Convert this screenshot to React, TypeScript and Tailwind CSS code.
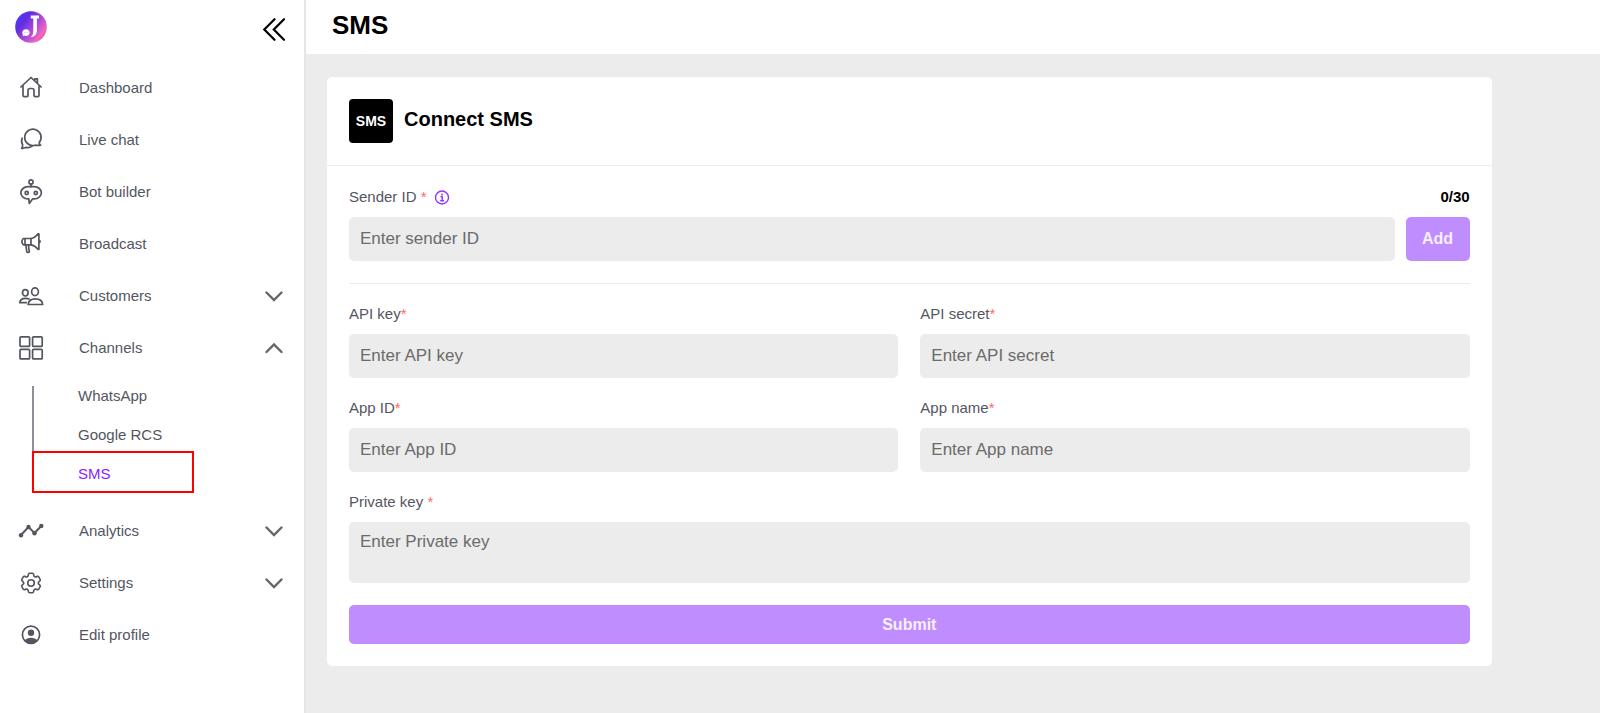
import { useState, type ReactNode } from "react";
import { HiOutlineCog6Tooth } from "react-icons/hi2";

function Icon({ children }: { children: ReactNode }) {
  return (
    <svg
      viewBox="0 0 26 26"
      className="h-[26px] w-[26px] shrink-0"
      fill="none"
      stroke="currentColor"
      strokeWidth="1.7"
      strokeLinecap="round"
      strokeLinejoin="round"
      aria-hidden="true"
    >
      {children}
    </svg>
  );
}

const HomeIcon = () => (
  <Icon>
    <path d="M2.9 12 13 2.5 23.1 12M16.8 5.600V3.800h2.600v4.400" />
    <path d="M5 11v9.500q0 1.200 1.200 1.200h2.600q1.200 0 1.200-1.200v-5q0-2 2-2h2q2 0 2 2v5q0 1.200 1.200 1.200h2.600q1.200 0 1.200-1.200V11" />
  </Icon>
);

const ChatIcon = () => (
  <Icon>
    <path d="M21.200 15.600A8.200 8.200 0 1 0 17.200 18.200q2.400.5 5.400 0-1.300-.8-1.400-2.600Z" />
    <path d="M4.200 11.200a7 7 0 0 0 .4 6.600q.2 2-.9 3.500 2.400.2 4.100-.9 3.400 1 6.200-1.200" />
  </Icon>
);

const BotIcon = () => (
  <Icon>
    <circle cx="13" cy="2.900" r="2.100" />
    <path d="M13 5.200v2.500" />
    <path d="M10 7.700h6.200a7.200 6.100 0 0 1 0 12.200h-1.700l-3.200 4.500-.5-4.500H10a7.200 6.100 0 0 1 0-12.200Z" />
    <circle cx="8.700" cy="14" r="1.600" />
    <circle cx="17.800" cy="14" r="1.600" />
  </Icon>
);

const MegaphoneIcon = () => (
  <Icon>
    <path d="M5.300 7.500H13v6.300H5.300q-2.800-3.100 0-6.300ZM7 7.500v6.300" />
    <path d="M13 7.500q4-.5 7-4.700h.9v15.500H20Q17 14.500 13 13.800M21.500 9.500q1.200 1 0 2" />
    <path d="M7.900 14l.8 6.500q.2 1 1.300 1 1.500 0 1.300-1.300l-.6-2.800V14" />
  </Icon>
);

const CustomersIcon = () => (
  <Icon>
    <ellipse cx="7.300" cy="9.800" rx="2.800" ry="3.200" />
    <ellipse cx="17" cy="8.800" rx="3.400" ry="3.900" />
    <path d="M8.300 19.600H1.700q.7-4.300 5.600-4.300 2.300 0 3.700.8" />
    <path d="M10.100 21.500q.6-5.600 7.300-5.600t7.300 5.600Z" />
  </Icon>
);

const ChannelsIcon = () => (
  <Icon>
    <rect x="2" y="1.800" width="9.600" height="9.600" rx="1" />
    <rect x="14.600" y="1.800" width="9.600" height="9.600" rx="1" />
    <rect x="2" y="14.300" width="9.600" height="9.600" rx="1" />
    <rect x="14.600" y="14.300" width="9.600" height="9.600" rx="1" />
  </Icon>
);

const AnalyticsIcon = () => (
  <Icon>
    <path d="m3 17 7.500-8 6 6 6.800-7" strokeWidth="1.900" />
    <g fill="currentColor" stroke="none">
      <circle cx="3" cy="17.200" r="2.200" />
      <circle cx="10.500" cy="9" r="2.200" />
      <circle cx="16.500" cy="15.200" r="2.200" />
      <circle cx="23.300" cy="7.900" r="2.200" />
    </g>
  </Icon>
);

const ProfileIcon = () => (
  <Icon>
    <circle cx="13" cy="12.800" r="8.600" />
    <circle cx="13" cy="10.800" r="3.200" fill="currentColor" stroke="none" />
    <path d="M6.600 18.500q2.200-2.800 6.400-2.800t6.400 2.800Q16.700 21.500 13 21.500t-6.400-3Z" fill="currentColor" stroke="none" />
  </Icon>
);

function Chevron({ up = false }: { up?: boolean }) {
  return (
    <svg viewBox="0 0 18 18" className="h-[18px] w-[18px]" fill="none" stroke="#666" strokeWidth="2.400" strokeLinecap="round" aria-hidden="true">
      <path d={up ? "m1.500 13 7.500-7.500 7.500 7.500" : "m1.500 5.500 7.500 7.500 7.500-7.500"} />
    </svg>
  );
}

function Logo() {
  return (
    <svg viewBox="0 0 32 32" className="h-8 w-8" role="img" aria-label="Logo">
      <defs>
        <linearGradient id="logoFill" x1="0.050" y1="0.150" x2="0.950" y2="0.850">
          <stop offset="0" stopColor="#4a3cff" />
          <stop offset="0.250" stopColor="#5f2ddf" />
          <stop offset="0.550" stopColor="#a848d8" />
          <stop offset="0.850" stopColor="#ee66c4" />
          <stop offset="1" stopColor="#ff4f5e" />
        </linearGradient>
      </defs>
      <circle cx="16" cy="16" r="15.800" fill="url(#logoFill)" />
      <path d="M15.800 4.600h8.200v2.800h-2.100v12.400q0 5.800-6.400 6.400 2.800-1.800 2.800-6.400V7.400h-2.500Z" fill="#fff" />
      <path d="M11 18.200a3.600 3.400 0 1 1-1.800 6.300l-1.700.8.400-1.700A3.600 3.400 0 0 1 11 18.200Z" fill="#fff" />
      <g fill="#a678e6">
        <circle cx="9.400" cy="21.600" r="0.450" />
        <circle cx="11" cy="21.600" r="0.450" />
        <circle cx="12.600" cy="21.600" r="0.450" />
      </g>
    </svg>
  );
}

type NavRowProps = {
  icon: ReactNode;
  label: string;
  open?: boolean;
  onToggle?: () => void;
};

function NavRow({ icon, label, open, onToggle }: NavRowProps) {
  const row = "flex h-[52px] w-full items-center gap-[35px] pr-[21px] pl-[18px] text-left text-[15px]";

  if (onToggle) {
    return (
      <button type="button" onClick={onToggle} aria-expanded={open} className={row}>
        {icon}
        <span className="flex-1">{label}</span>
        <Chevron up={open} />
      </button>
    );
  }

  return (
    <a href="#" className={row}>
      {icon}
      <span>{label}</span>
    </a>
  );
}

function Sidebar() {
  const [open, setOpen] = useState<string[]>(["Channels"]);
  const toggle = (name: string) =>
    setOpen(open.includes(name) ? open.filter((n) => n !== name) : [...open, name]);

  return (
    <aside className="w-[306px] shrink-0 border-r-2 border-[#e5e5e5] bg-white text-[#54565f]">
      <div className="flex h-[62px] items-start justify-between pt-[11px] pr-[18px] pl-[15px]">
        <Logo />
        <button type="button" aria-label="Collapse menu" className="pt-[6px]">
          <svg viewBox="0 0 24 24" className="h-6 w-6" fill="none" stroke="#000" strokeWidth="2.200" strokeLinecap="round" aria-hidden="true">
            <path d="M12.500 2.200 2.300 12.500l10.200 10.300M22 2.200 11.800 12.500 22 22.800" />
          </svg>
        </button>
      </div>

      <nav>
        <NavRow icon={<HomeIcon />} label="Dashboard" />
        <NavRow icon={<ChatIcon />} label="Live chat" />
        <NavRow icon={<BotIcon />} label="Bot builder" />
        <NavRow icon={<MegaphoneIcon />} label="Broadcast" />
        <NavRow icon={<CustomersIcon />} label="Customers" open={open.includes("Customers")} onToggle={() => toggle("Customers")} />
        <NavRow icon={<ChannelsIcon />} label="Channels" open={open.includes("Channels")} onToggle={() => toggle("Channels")} />
        {open.includes("Channels") && (
          <ul className="mt-3 mb-3 ml-8 border-l-2 border-[#8e8f98] text-[15px] leading-5">
            <li className="mb-[19px] pl-11">
              <a href="#">WhatsApp</a>
            </li>
            <li className="mb-[6px] pl-11">
              <a href="#">Google RCS</a>
            </li>
            <li className="-ml-[2px] flex h-[42px] w-[162px] items-center border-2 border-[#ff0000] pt-1 pl-11 text-[#8a1cff]">
              <a href="#" aria-current="page">SMS</a>
            </li>
          </ul>
        )}
        <NavRow icon={<AnalyticsIcon />} label="Analytics" open={open.includes("Analytics")} onToggle={() => toggle("Analytics")} />
        <NavRow
          icon={<HiOutlineCog6Tooth className="h-[26px] w-[26px] shrink-0" />}
          label="Settings"
          open={open.includes("Settings")}
          onToggle={() => toggle("Settings")}
        />
        <NavRow icon={<ProfileIcon />} label="Edit profile" />
      </nav>
    </aside>
  );
}

const Star = () => <span className="text-[#ff6b57]">*</span>;

const labelClass = "block text-[15px] leading-5 text-[#54565f]";
const inputClass = "w-full rounded-[5px] bg-[#ececec] px-[11px] text-[17px] text-black outline-none placeholder:text-[#6b6b6b]";

function Field({ id, label }: { id: string; label: string }) {
  return (
    <div>
      <label htmlFor={id} className={labelClass}>
        {label}
        <Star />
      </label>
      <input id={id} placeholder={`Enter ${label}`} className={`${inputClass} mt-[10px] h-11`} />
    </div>
  );
}

export default function App() {
  return (
    <div className="flex min-h-screen bg-[#ececec] font-['Liberation_Sans',Arial,sans-serif]">
      <Sidebar />

      <main className="min-w-0 flex-1">
        <header className="flex h-[54px] items-center bg-white px-[26px] pb-1">
          <h1 className="text-[26px] font-bold text-black">SMS</h1>
        </header>

        <section className="mt-[23px] ml-[21px] w-[90%] rounded-[5px] bg-white">
          <div className="flex items-center gap-[11px] border-b border-[#ececec] p-[22px]">
            <div className="flex h-11 w-11 items-center justify-center rounded bg-black text-sm font-bold text-white">SMS</div>
            <h2 className="pb-1 text-xl font-bold text-black">Connect SMS</h2>
          </div>

          <form className="px-[22px] pt-[21px] pb-[22px]" onSubmit={(e) => e.preventDefault()}>
            <div className="flex items-center justify-between">
              <div className="flex items-center gap-[7px]">
                <label htmlFor="sender" className={labelClass}>
                  Sender ID <Star />
                </label>
                <svg viewBox="0 0 16 16" className="h-4 w-4" fill="none" stroke="#9333ff" strokeWidth="1.400" role="img" aria-label="Sender ID info">
                  <circle cx="8" cy="8.500" r="6.500" />
                  <path d="M6.500 7.500h1.700v3.800M6.200 11.800h4" />
                  <circle cx="8" cy="5.300" r="0.900" fill="#9333ff" stroke="none" />
                </svg>
              </div>
              <span className="text-[15px] leading-5 font-bold text-black">0/30</span>
            </div>

            <div className="mt-[10px] flex gap-[11px]">
              <input id="sender" placeholder="Enter sender ID" className={`${inputClass} h-11`} />
              <button type="button" className="h-11 w-16 shrink-0 rounded-[5px] bg-[#c08dff] text-base font-bold text-[#f6efff]">
                Add
              </button>
            </div>

            <hr className="mt-[22px] mb-5 border-[#ececec]" />

            <div className="grid grid-cols-2 gap-x-[22px] gap-y-5">
              <Field id="api-key" label="API key" />
              <Field id="api-secret" label="API secret" />
              <Field id="app-id" label="App ID" />
              <Field id="app-name" label="App name" />
            </div>

            <div className="mt-5">
              <label htmlFor="private-key" className={labelClass}>
                Private key <Star />
              </label>
              <textarea
                id="private-key"
                placeholder="Enter Private key"
                className={`${inputClass} mt-[10px] block h-[61px] resize-none py-[7px]`}
              />
            </div>

            <button type="submit" className="mt-[22px] block h-[39px] w-full rounded-[5px] bg-[#c08dff] text-base font-bold text-[#f6efff]">
              Submit
            </button>
          </form>
        </section>
      </main>
    </div>
  );
}
